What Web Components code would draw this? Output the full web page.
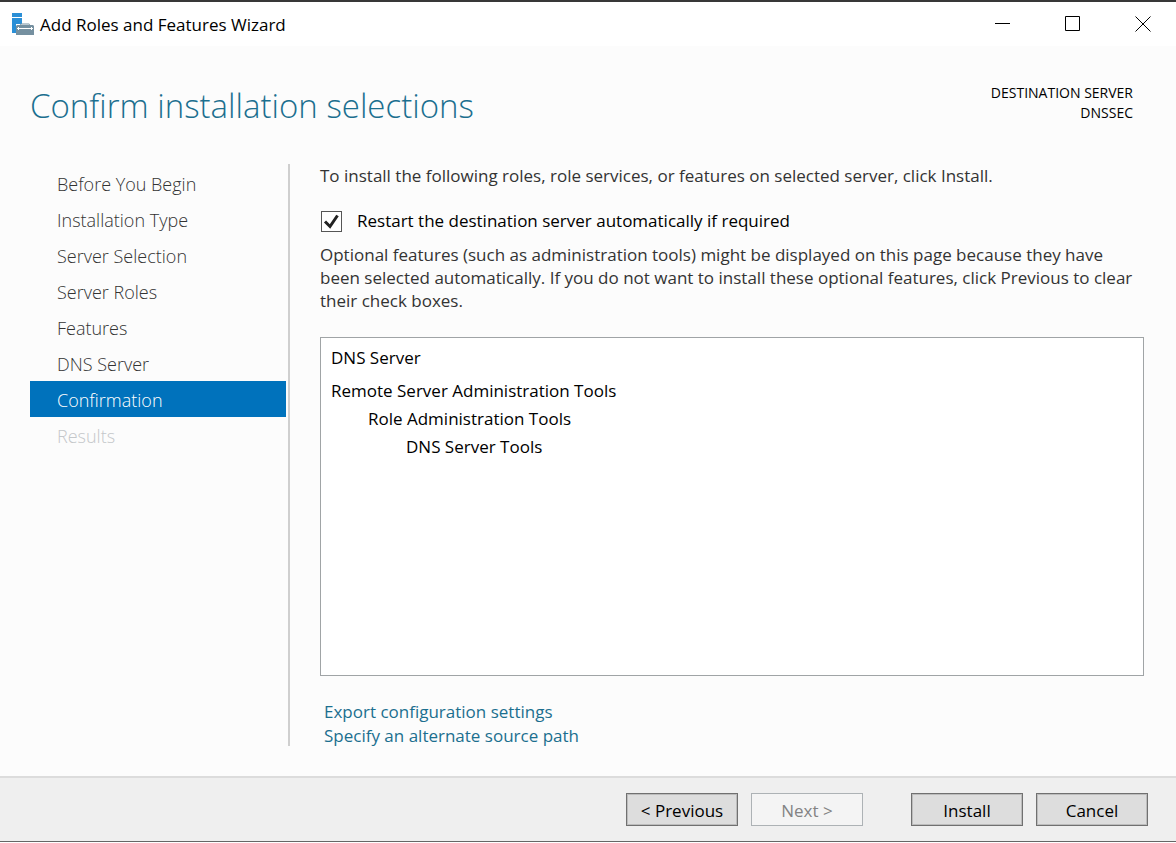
<!DOCTYPE html>
<html lang="en">
<head>
<meta charset="utf-8">
<meta name="viewport" content="width=device-width, initial-scale=1">
<title>Add Roles and Features Wizard</title>
<style>
  html { height: 100%; }
  body {
    margin: 0;
    height: 100%;
    font-family: "Segoe UI", "Open Sans", "Noto Sans", sans-serif;
    font-size: 17px;
    line-height: 24px;
    color: #000;
  }
</style>
</head>
<body>
<wizard-window>
  <wizard-titlebar slot="titlebar">Add Roles and Features Wizard</wizard-titlebar>
  <wizard-header slot="header" server="DNSSEC">Confirm installation selections</wizard-header>
  <wizard-steps slot="steps">
    <wizard-step>Before You Begin</wizard-step>
    <wizard-step>Installation Type</wizard-step>
    <wizard-step>Server Selection</wizard-step>
    <wizard-step>Server Roles</wizard-step>
    <wizard-step>Features</wizard-step>
    <wizard-step>DNS Server</wizard-step>
    <wizard-step state="current">Confirmation</wizard-step>
    <wizard-step state="disabled">Results</wizard-step>
  </wizard-steps>
  <confirm-page>
    <span slot="intro">To install the following roles, role services, or features on selected server, click Install.</span>
    <wizard-check slot="restart" checked>Restart the destination server automatically if required</wizard-check>
    <span slot="note">Optional features (such as administration tools) might be displayed on this page because they have been selected automatically. If you do not want to install these optional features, click Previous to clear their check boxes.</span>
    <selection-item slot="selection" group>DNS Server</selection-item>
    <selection-item slot="selection" group>Remote Server Administration Tools</selection-item>
    <selection-item slot="selection" level="1">Role Administration Tools</selection-item>
    <selection-item slot="selection" level="2">DNS Server Tools</selection-item>
    <wizard-link slot="links" href="#export">Export configuration settings</wizard-link>
    <wizard-link slot="links" href="#source">Specify an alternate source path</wizard-link>
  </confirm-page>
  <wizard-footer slot="footer">
    <wizard-button>&lt; Previous</wizard-button>
    <wizard-button disabled>Next &gt;</wizard-button>
    <wizard-button slot="actions">Install</wizard-button>
    <wizard-button slot="actions">Cancel</wizard-button>
  </wizard-footer>
</wizard-window>

<script>
function define(name, html, setup) {
  const template = document.createElement('template');
  template.innerHTML = html;
  customElements.define(name, class extends HTMLElement {
    constructor() {
      super();
      this.attachShadow({ mode: 'open' }).append(template.content.cloneNode(true));
    }
    connectedCallback() {
      if (setup) setup(this, this.shadowRoot);
    }
  });
}

define('wizard-window', `
  <style>
    :host { display: flex; flex-direction: column; box-sizing: border-box; min-height: 100%; background: #fcfcfc; border-top: 2px solid #383838; }
    .content { flex: 1; display: grid; grid-template-columns: 260px minmax(0, 1fr); gap: 30px; padding: 0 32px 28px 30px; }
    aside { border-right: 2px solid #cfcfcf; margin-bottom: 2px; }
    main { display: flex; min-width: 0; }
    ::slotted(confirm-page) { flex: 1; }
  </style>
  <slot name="titlebar"></slot>
  <slot name="header"></slot>
  <div class="content">
    <aside><slot name="steps"></slot></aside>
    <main><slot></slot></main>
  </div>
  <slot name="footer"></slot>
`);

define('wizard-titlebar', `
  <style>
    :host { display: flex; align-items: center; height: 44px; background: #fff; padding-left: 12px; }
    .icon { width: 22px; height: 22px; margin-right: 6px; }
    .title { flex: 1; padding-top: 2px; }
    .controls { display: flex; gap: 4px; }
    button { display: grid; place-items: center; width: 66px; height: 44px; border: 0; padding: 0; background: none; }
    svg { display: block; }
  </style>
  <svg class="icon" viewBox="0 0 22 22" aria-hidden="true">
    <path fill="#2b8fd6" d="M0 0h10v4H0zM0 5h10v6H4v9H0z"/>
    <path fill="none" stroke="#7590a0" d="M8.500 12.500v-1q0-.5.5-.5h8q.5 0 .5.500v1"/>
    <path fill="#7590a0" d="M5 12h16l1 1v9H4v-9z"/>
    <path fill="none" stroke="#fff" d="M5 15.500h16M6.500 14v3M19.500 14v3"/>
  </svg>
  <span class="title"><slot></slot></span>
  <div class="controls">
    <button type="button" aria-label="Minimize"><svg width="16" height="16"><path d="M0 7.500h15" stroke="#000"/></svg></button>
    <button type="button" aria-label="Maximize"><svg width="16" height="16"><path d="M.5.5h14v14H.5z" fill="none" stroke="#000"/></svg></button>
    <button type="button" aria-label="Close"><svg width="16" height="16"><path d="M.5.5l15 15m0-15l-15 15" stroke="#000"/></svg></button>
  </div>
`);

define('wizard-header', `
  <style>
    :host { display: flex; justify-content: space-between; align-items: flex-start; padding: 36px 43px 34px 30px; }
    h1 { margin: 0; font-size: 33px; line-height: 48px; font-weight: 300; color: #1b6f8f; }
    .server { padding-top: 1px; font-size: 14px; line-height: 20px; text-align: right; }
  </style>
  <h1><slot></slot></h1>
  <div class="server"><div>DESTINATION SERVER</div><div class="name"></div></div>
`, (host, root) => {
  root.querySelector('.name').textContent = host.getAttribute('server');
});

define('wizard-steps', `
  <style>:host { display: block; padding: 1px 2px 0 0; }</style>
  <nav aria-label="Wizard steps"><slot></slot></nav>
`);

define('wizard-step', `
  <style>
    :host { display: block; padding: 2px 27px 0; font-size: 18px; line-height: 34px; font-weight: 300; color: #333; }
    :host([state="current"]) { background: #0072bc; color: #fff; }
    :host([state="disabled"]) { color: #c4c7ca; }
    a { color: inherit; text-decoration: none; }
  </style>
  <a href="#"><slot></slot></a>
`, (host, root) => {
  const link = root.querySelector('a');
  if (host.getAttribute('state') === 'current') link.setAttribute('aria-current', 'step');
  if (host.getAttribute('state') === 'disabled') link.removeAttribute('href');
});

define('confirm-page', `
  <style>
    :host { display: flex; flex-direction: column; color: #333; }
    p { margin: 0; }
    .restart { margin: 21px 0 10px; }
    .note { line-height: 23px; }
    .list { flex: 1; box-sizing: border-box; margin: 25px 0 24px; padding: 6px 10px; background: #fff; border: 1px solid #a0a4a6; }
    .links { padding-left: 4px; }
  </style>
  <p><slot name="intro"></slot></p>
  <div class="restart"><slot name="restart"></slot></div>
  <p class="note"><slot name="note"></slot></p>
  <div class="list" role="list"><slot name="selection"></slot></div>
  <div class="links"><slot name="links"></slot></div>
`);

define('wizard-check', `
  <style>
    :host { display: block; color: #000; }
    label { display: flex; align-items: center; gap: 15px; }
    input { appearance: none; margin: 0 0 0 1px; width: 21px; height: 21px; box-sizing: border-box; border: 1px solid #555; background: #fff; }
    input:checked { background: #fff url("data:image/svg+xml,%3Csvg xmlns='http://www.w3.org/2000/svg' viewBox='0 0 19 19'%3E%3Cpath d='M3 9.500l5 5 7.500-11' fill='none' stroke='%23222' stroke-width='3'/%3E%3C/svg%3E"); }
  </style>
  <label><input type="checkbox"><span><slot></slot></span></label>
`, (host, root) => {
  root.querySelector('input').checked = host.hasAttribute('checked');
});

define('selection-item', `
  <style>
    :host { display: block; line-height: 28px; color: #000; }
    :host([group]:not(:first-of-type)) { margin-top: 5px; }
    :host([level="1"]) { padding-left: 37px; }
    :host([level="2"]) { padding-left: 75px; }
  </style>
  <slot></slot>
`, host => host.setAttribute('role', 'listitem'));

define('wizard-link', `
  <style>
    :host { display: block; }
    a { color: #1b6f8f; text-decoration: none; }
  </style>
  <a><slot></slot></a>
`, (host, root) => {
  root.querySelector('a').href = host.getAttribute('href');
});

define('wizard-footer', `
  <style>
    :host { display: block; background: #fff; padding-bottom: 1px; }
    .bar { display: flex; justify-content: flex-end; gap: 48px; padding: 15px 28px 15px; background: #efefef; border-top: 2px solid #dcdcdc; border-bottom: 1px solid #666; }
    .group { display: flex; gap: 13px; }
  </style>
  <div class="bar">
    <div class="group"><slot></slot></div>
    <div class="group"><slot name="actions"></slot></div>
  </div>
`);

define('wizard-button', `
  <style>
    :host { display: block; }
    button { display: block; box-sizing: border-box; width: 112px; height: 33px; padding: 2px 0 0; border: 1px solid #707070; outline: 1px solid #7070704d; outline-offset: -2px; background: #ddd; color: #000; font: inherit; }
    button:disabled { border-color: #adb2b5; outline: 0; background: #f4f4f4; color: #838383; }
  </style>
  <button type="button"><slot></slot></button>
`, (host, root) => {
  root.querySelector('button').disabled = host.hasAttribute('disabled');
});
</script>
</body>
</html>
